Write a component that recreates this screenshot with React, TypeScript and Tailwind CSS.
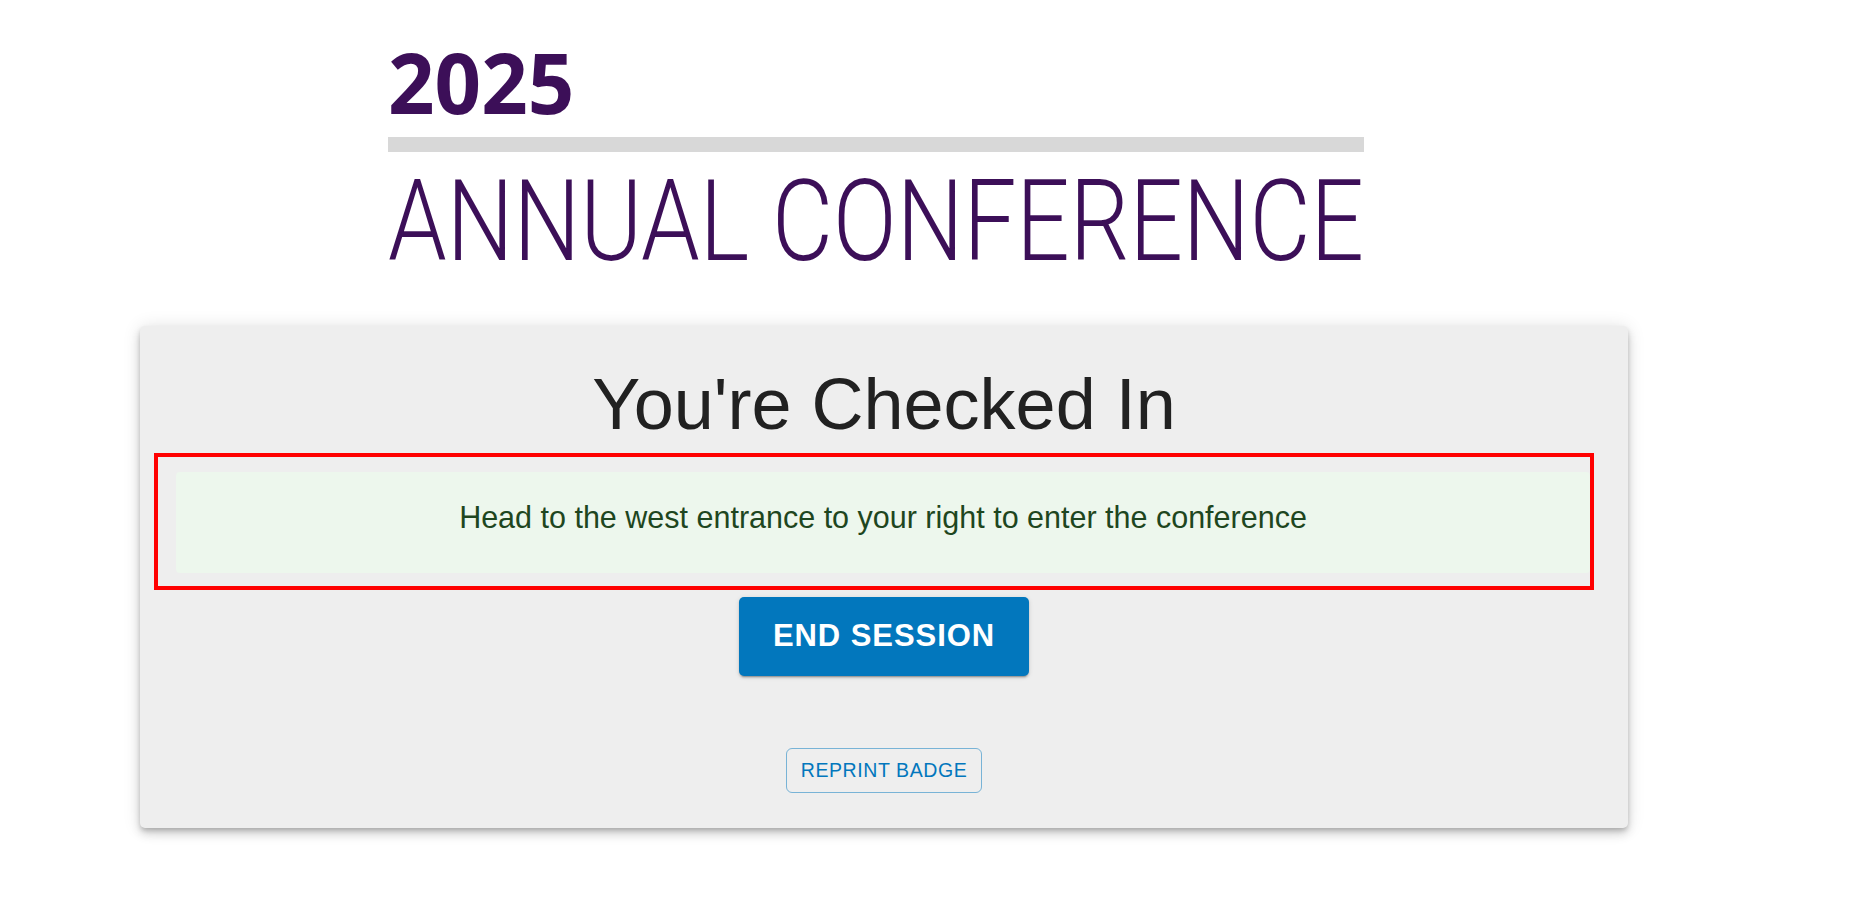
export default function App() {
  return (
    <div className="min-h-screen bg-white pb-[60px] font-['Liberation_Sans',Arial,sans-serif]">
      {/* Conference header */}
      <header className="ml-[388px] w-[976px] pt-[40px] text-[#3c0f58]">
        <div className="h-[84px] whitespace-nowrap font-['Open_Sans',sans-serif] text-[84px] font-bold leading-none">
          <span className="inline-block origin-left scale-x-[0.97]">2025</span>
        </div>
        <div className="mt-[13px] h-[15px] bg-[#d8d8d8]" />
        <div className="mt-[12px] h-[114px] whitespace-nowrap font-['Roboto',sans-serif] text-[114px] font-light leading-none">
          <span className="inline-block origin-left scale-x-[0.824]">ANNUAL CONFERENCE</span>
        </div>
      </header>

      {/* Check-in card */}
      <main className="ml-[140px] mt-[48px] flex w-[1488px] flex-col items-center rounded-[5px] bg-[#eeeeee] pb-[35px] pt-[42px] shadow-[0_3px_5px_-1px_rgba(0,0,0,0.2),0_6px_10px_0_rgba(0,0,0,0.14),0_1px_18px_0_rgba(0,0,0,0.12)]">
        <h1 className="text-[72px] font-normal leading-none text-[#212121]">You're Checked In</h1>

        <div className="ml-[14px] mr-[34px] mt-[13px] self-stretch border-4 border-[#ff0000] pb-[13px] pl-[18px] pt-[15px]">
          <div className="flex h-[101px] items-center justify-center rounded-[4px] bg-[#edf7ed] pb-[9px] text-[30.5px] text-[#1e4620]">
            Head to the west entrance to your right to enter the conference
          </div>
        </div>

        <button className="mt-[7px] flex h-[79px] w-[290px] items-center justify-center rounded-[5px] bg-[#0277bd] text-[31px] font-bold tracking-[0.03em] text-white shadow-[0_3px_1px_-2px_rgba(0,0,0,0.2),0_2px_2px_0_rgba(0,0,0,0.14),0_1px_5px_0_rgba(0,0,0,0.12)]">
          END SESSION
        </button>

        <button className="mt-[72px] flex h-[45px] w-[196px] items-center justify-center rounded-[6px] border border-[#0277bd]/50 text-[19.5px] tracking-[0.03em] text-[#0277bd]">
          REPRINT BADGE
        </button>
      </main>
    </div>
  );
}
